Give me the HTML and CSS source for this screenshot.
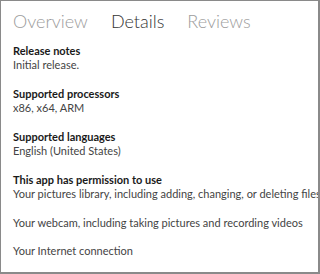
FILE: index.html
```html
<!DOCTYPE html>
<html>
<head>
<meta charset="utf-8">
<link rel="stylesheet" href="styles.css">
</head>
<body>
<div class="frame">
  <div class="tabs">
    <span class="tab">Overview</span>
    <span class="tab active">Details</span>
    <span class="tab">Reviews</span>
  </div>
  <div class="section">
    <div class="label">Release notes</div>
    <div class="value">Initial release.</div>
  </div>
  <div class="section">
    <div class="label">Supported processors</div>
    <div class="value">x86, x64, ARM</div>
  </div>
  <div class="section">
    <div class="label">Supported languages</div>
    <div class="value">English (United States)</div>
  </div>
  <div class="section">
    <div class="label">This app has permission to use</div>
    <div class="perm">Your pictures library, including adding, changing, or deleting files</div>
    <div class="perm">Your webcam, including taking pictures and recording videos</div>
    <div class="perm">Your Internet connection</div>
  </div>
</div>
</body>
</html>
```
FILE: styles.css
```css
html, body {
  margin: 0;
  padding: 0;
  background: #ffffff;
}
.frame {
  box-sizing: border-box;
  width: 320px;
  height: 274px;
  border-left: 1px solid #8a8a8a;
  border-top: 1px solid #8a8a8a;
  border-right: 2px solid #8a8a8a;
  border-bottom: 2px solid #8a8a8a;
  padding: 0 0 0 12px;
  overflow: hidden;
  font-family: "Lato", "Liberation Sans", sans-serif;
  color: #333;
}
.tabs {
  display: flex;
  gap: 23px;
  height: 43px;
  padding-top: 9px;
  box-sizing: border-box;
  font-size: 18px;
  line-height: 22px;
  font-weight: 300;
  white-space: nowrap;
}
.tab { color: #9c9c9c; }
.tab.active { color: #333; }
.section {
  margin-bottom: 15px;
  font-size: 11px;
  line-height: 14px;
  white-space: nowrap;
}
.label {
  font-weight: 700;
  color: #1a1a1a;
}
.value, .perm {
  color: #444;
}
.perm + .perm {
  margin-top: 14.5px;
}
```
